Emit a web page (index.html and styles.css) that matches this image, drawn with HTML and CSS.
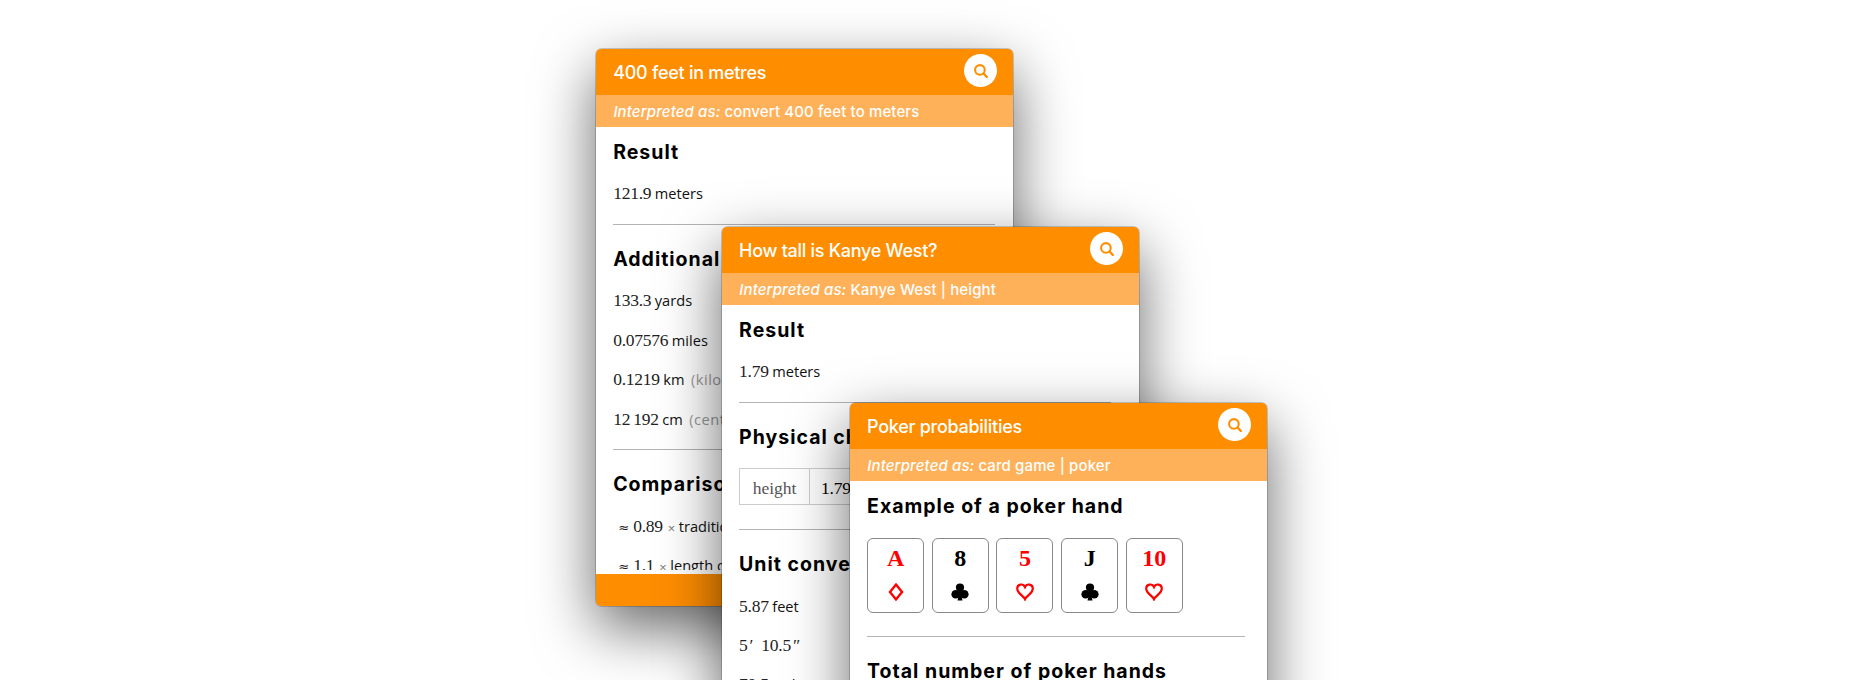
FILE: index.html
```
<!DOCTYPE html>
<html lang="en">
<head>
<meta charset="utf-8">
<title>Answers</title>
<link rel="stylesheet" href="styles.css">
</head>
<body>
<svg width="0" height="0" class="defs">
  <symbol id="search" viewBox="0 0 14 14"><circle cx="5.9" cy="5.9" r="4.8" fill="none" stroke="currentColor" stroke-width="2.1"/><path d="M9.5 9.5l3.3 3.5" stroke="currentColor" stroke-width="2.3" stroke-linecap="round"/></symbol>
  <symbol id="diamond" viewBox="0 0 18 18"><path d="M9 1.6L15 9L9 16.4L3 9Z" fill="none" stroke="currentColor" stroke-width="2.4"/></symbol>
  <symbol id="heart" viewBox="0 0 18 18"><path d="M9 16.2C7.6 12.8 1.2 10.6 1.2 5.6C1.2 .7 7.4 .3 9 4C10.6 .3 16.8 .7 16.8 5.6C16.8 10.6 10.4 12.8 9 16.2Z" fill="none" stroke="currentColor" stroke-width="2.2"/></symbol>
  <symbol id="club" viewBox="0 0 18 18"><g fill="currentColor"><circle cx="9" cy="4.6" r="4.1"/><circle cx="4.7" cy="11.2" r="4.3"/><circle cx="13.3" cy="11.2" r="4.3"/><path d="M7.5 6h3v7l1 4.4h-5l1-4.4z"/></g></symbol>
</svg>
<main class="desktop">
  <article class="window first">
    <header class="bar"><h1>400 feet in metres</h1><button class="search"><svg><use href="#search"/></svg></button></header>
    <p class="interp"><em>Interpreted as:</em> <span>convert 400 feet to meters</span></p>
    <div class="body">
      <section><h2>Result</h2><p class="row"><b>121.9</b><span>meters</span></p></section>
      <section><h2>Additional conversions</h2>
        <p class="row"><b>133.3</b><span>yards</span></p>
        <p class="row"><b>0.07576</b><span>miles</span></p>
        <p class="row"><b>0.1219</b><span>km</span><i>(kilometers)</i></p>
        <p class="row"><b>12<s></s>192</b><span>cm</span><i>(centimeters)</i></p></section>
      <section><h2>Comparisons</h2>
        <p class="row approx"><u>≈</u><b>0.89</b><small>×</small><span>traditional</span></p>
        <p class="row approx"><u>≈</u><b>1.1</b><small>×</small><span>length of</span></p></section>
    </div>
    <footer class="foot"></footer>
  </article>
  <article class="window second">
    <header class="bar"><h1>How tall is Kanye West?</h1><button class="search"><svg><use href="#search"/></svg></button></header>
    <p class="interp"><em>Interpreted as:</em> <span>Kanye West | height</span></p>
    <div class="body">
      <section><h2>Result</h2><p class="row"><b>1.79</b><span>meters</span></p></section>
      <section class="tabular"><h2>Physical characteristics</h2><div class="table"><div class="key">height</div><div class="val">1.79 meters</div></div></section>
      <section><h2>Unit conversions</h2>
        <p class="row"><b>5.87</b><span>feet</span></p>
        <p class="row"><b>5<q>′</q> 10.5<q>″</q></b></p>
        <p class="row last"><b>70.5</b><span>inches</span></p></section>
    </div>
  </article>
  <article class="window third">
    <header class="bar"><h1>Poker probabilities</h1><button class="search"><svg><use href="#search"/></svg></button></header>
    <p class="interp"><em>Interpreted as:</em> <span>card game | poker</span></p>
    <div class="body">
      <section class="hand"><h2>Example of a poker hand</h2>
        <div class="cards">
          <div class="card red">A<svg><use href="#diamond"/></svg></div>
          <div class="card">8<svg><use href="#club"/></svg></div>
          <div class="card red">5<svg><use href="#heart"/></svg></div>
          <div class="card">J<svg><use href="#club"/></svg></div>
          <div class="card red">10<svg><use href="#heart"/></svg></div>
        </div></section>
      <section><h2>Total number of poker hands</h2></section>
    </div>
  </article>
</main>
</body>
</html>
```
FILE: styles.css
```
* { box-sizing: border-box; margin: 0; padding: 0; }
body { background: #fff; font-family: Inter, sans-serif; overflow: hidden; }
.defs { position: absolute; }
.desktop { position: relative; height: 680px; overflow: hidden; }
.window {
  position: absolute; width: 417px; height: 557px;
  display: flex; flex-direction: column;
  background: #fff; border-radius: 6px;
  box-shadow: 0 0 0 1px rgba(0,0,0,.18), 0 22px 60px rgba(0,0,0,.6);
}
.first { left: 595.6px; top: 49px; }
.second { left: 721.5px; top: 227px; }
.third { left: 849.5px; top: 403px; }
.bar {
  height: 46px; flex: none; padding: 0 15.5px 0 17.6px;
  display: flex; justify-content: space-between; align-items: flex-start;
  background: #ff8d00; color: #fff; border-radius: 5px 5px 0 0;
}
h1 { font-size: 18px; font-weight: 500; line-height: 47px; white-space: nowrap; letter-spacing: -.28px; }
.search {
  width: 33px; height: 33px; margin-top: 5.4px; border: 0; border-radius: 50%;
  background: #fff; color: #ff8d00; display: grid; place-items: center;
}
.search svg { width: 14px; height: 14px; }
.interp {
  height: 32px; flex: none; padding-left: 17.8px; line-height: 33px; letter-spacing: .12px;
  background: #ffb15a; color: #fff; font-size: 15px; font-weight: 500; white-space: nowrap;
}
.body { flex: 1; min-height: 0; overflow: hidden; padding: 0 18px 0 17.6px; margin-bottom: 4px; }
.second .body { padding-right: 28px; }
.third .body { padding-right: 22px; }
section { padding: 9.7px 0 10px; border-bottom: 1px solid #b3b3b3; white-space: nowrap; }
section:first-child { padding-top: 0; }
section:last-child { border-bottom: 0; }
h2 { padding: 4.5px 0 2.5px; line-height: 40px; font-size: 19.5px; font-weight: 700; letter-spacing: 1px; color: #000; }
.row { height: 39.5px; line-height: 39.5px; display: flex; color: #222; font-size: 15px; }
.row b, .val { font: 400 17.5px/39px "Liberation Serif", serif; letter-spacing: -.25px; }
.row span { margin-left: 3.5px; font: 14.6px/39.5px "Open Sans", sans-serif; color: #111; }
.row i { margin-left: 6.5px; font: 400 14.6px/39.5px "Open Sans", sans-serif; color: #999; letter-spacing: .5px; }
.row s { display: inline-block; width: 3px; }
.row q { quotes: none; margin: 0 4px 0 2px; }
.row u { width: 15px; text-decoration: none; font: 13px/41px "DejaVu Sans", sans-serif; }
.row small { margin-left: 5px; font: 13px/42px "Open Sans", sans-serif; color: #777; }
.row.last { margin-top: -1px; }
.approx { padding-left: 5px; }
.foot { height: 32.5px; flex: none; background: #ff8d00; border-radius: 0 0 5px 5px; }
.tabular { padding-bottom: 24px; }
.table { margin-top: 9px; height: 37px; display: flex; border: 1px solid #ccc; }
.key { width: 70px; border-right: 1px solid #ccc; text-align: center; font: 17.5px/39px "Liberation Serif", serif; color: #555; }
.table .val { padding-left: 11px; line-height: 39px; }
.hand { padding-bottom: 23px; }
.cards { display: flex; gap: 7.7px; margin-top: 9.5px; }
.card {
  width: 57px; height: 75px; border: 1px solid #888; border-radius: 6px;
  display: flex; flex-direction: column; align-items: center;
  font: 700 24px/38px "Liberation Serif", serif; color: #000;
}
.card svg { width: 18px; height: 18px; margin-top: 6px; }
.red { color: #f00; }
```
